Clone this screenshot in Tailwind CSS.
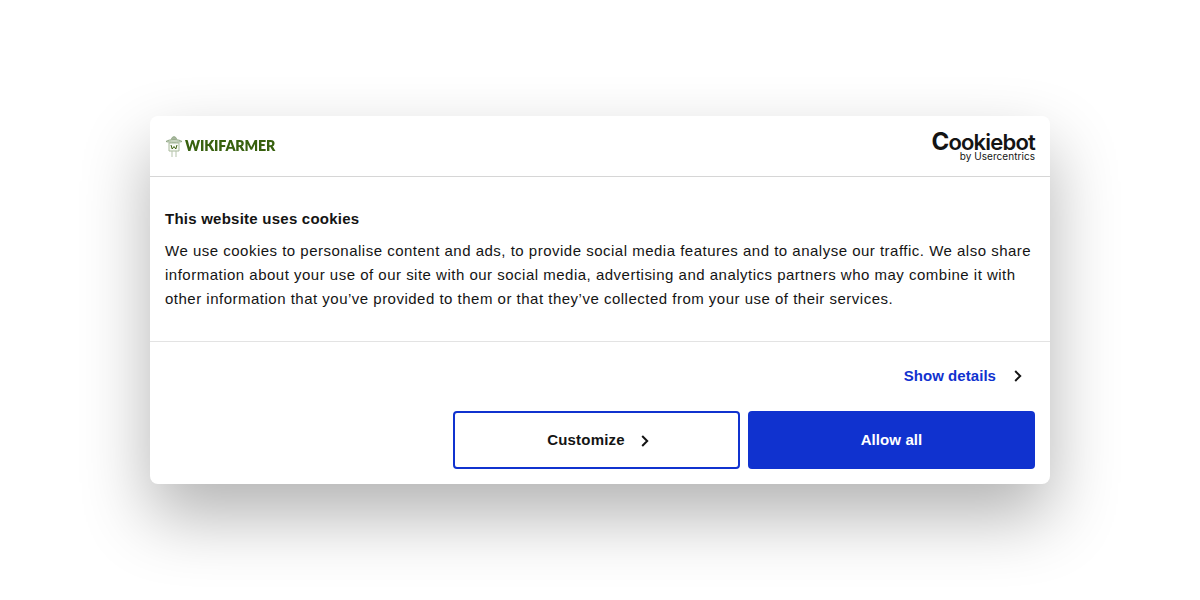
<!DOCTYPE html>
<html lang="en">
<head>
  <meta charset="UTF-8"/>
  <meta name="viewport" content="width=device-width,initial-scale=1.0"/>
  <title>Cookie consent</title>
  <script src="https://cdn.jsdelivr.net/npm/@tailwindcss/browser@4"></script>
</head>
<body class="h-screen overflow-hidden bg-white flex items-center justify-center font-['Liberation_Sans',Arial,sans-serif] text-[#141414]">

  <!-- Dialog -->
  <div class="w-[900px] h-[368px] flex flex-col bg-white rounded-lg shadow-[0_32px_68px_rgba(0,0,0,0.3)]">

    <!-- Header -->
    <div class="h-[61px] shrink-0 flex items-center justify-between pl-[15px] pr-[15px] border-b border-[#d6d6d6]">
      <div class="flex items-center gap-[2px]">
        <svg width="18" height="23" viewBox="0 0 18 23" fill="none" stroke="#8fa683" stroke-width="1">
          <path d="M6.5 4.5 C6.5 0.8 11.5 0.8 11.5 4.5" fill="#a9b8a0"/>
          <path d="M1 6.5 C4 4 14 4 17 6.5 C14 7.6 4 7.6 1 6.5Z" fill="#d5dece"/>
          <path d="M4 8 H14 V16 H4Z" fill="#f7f9f5" stroke="#a9ba9c"/>
          <path d="M6 10 L7.2 14 L9 11.5 L10.8 14 L12 10" stroke="#3f6212" stroke-width="1"/>
          <path d="M7 16 V22 M11 16 V22" stroke="#b5c4ab"/>
        </svg>
        <span class="font-['Lato',sans-serif] font-extrabold text-[14.2px] leading-none tracking-[-0.15px] text-[#38610f] blur-[0.3px]">WIKIFARMER</span>
      </div>
      <div class="flex flex-col items-end">
        <span class="font-['Inter',sans-serif] font-semibold text-[22px] leading-[19px] tracking-[-0.8px] text-[#141414]"><span class="text-[24px] font-bold">C</span>ookiebot</span>
        <span class="font-['Inter',sans-serif] text-[10px] leading-[9px] tracking-[0.05px] text-[#141414]">by Usercentrics</span>
      </div>
    </div>

    <!-- Body -->
    <div class="h-[165px] shrink-0 px-[15px] pt-[30px] border-b border-[#e3e3e3]">
      <h2 class="text-[15px] leading-6 font-bold tracking-[0.24px] mb-2">This website uses cookies</h2>
      <p class="text-[15px] leading-6 tracking-[0.495px]">We use cookies to personalise content and ads, to provide social media features and to analyse our traffic. We also share information about your use of our site with our social media, advertising and analytics partners who may combine it with other information that you’ve provided to them or that they’ve collected from your use of their services.</p>
    </div>

    <!-- Footer -->
    <div class="flex-1 flex flex-col px-[15px] pb-4">
      <div class="h-[69px] shrink-0 flex items-center justify-end pr-[13px]">
        <a class="text-[15px] font-bold tracking-[0.05px] text-[#1032cf]">Show details</a>
        <svg class="ml-[18px] -mt-0.5" width="8" height="12" viewBox="0 0 8 12" fill="none" stroke="#141414" stroke-width="2"><path d="M1.2 1 L6.2 6 L1.2 11"/></svg>
      </div>
      <div class="flex justify-end gap-2">
        <button class="w-[287px] h-[58px] pl-[3px] flex items-center justify-center rounded border-2 border-[#1032cf] bg-white text-[15px] font-bold tracking-[0.2px]">
          Customize
          <svg class="ml-[16px] mt-0.5" width="8" height="12" viewBox="0 0 8 12" fill="none" stroke="#141414" stroke-width="2"><path d="M1.2 1 L6.2 6 L1.2 11"/></svg>
        </button>
        <button class="w-[287px] h-[58px] flex items-center justify-center rounded bg-[#1032cf] text-white text-[15px] font-bold tracking-[0.1px]">Allow all</button>
      </div>
    </div>
  </div>

</body>
</html>
